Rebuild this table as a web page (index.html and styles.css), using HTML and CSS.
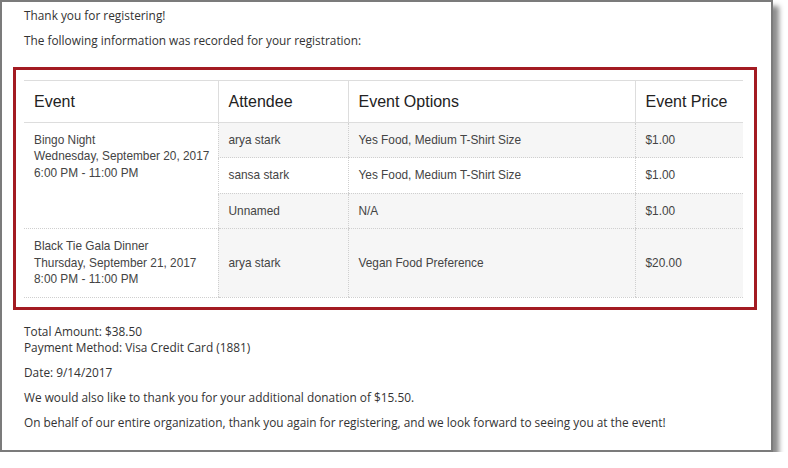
FILE: index.html
```html
<!DOCTYPE html>
<html>
<head>
<meta charset="utf-8">
<link rel="stylesheet" href="styles.css">
</head>
<body>
<div class="frame">
  <p>Thank you for registering!</p>
  <p>The following information was recorded for your registration:</p>
  <div class="highlight">
    <table class="reg">
      <colgroup>
        <col class="c-event">
        <col class="c-att">
        <col class="c-opt">
        <col class="c-price">
      </colgroup>
      <thead>
        <tr><th>Event</th><th>Attendee</th><th>Event Options</th><th>Event Price</th></tr>
      </thead>
      <tbody>
        <tr>
          <td rowspan="3" class="ev">Bingo Night<br>Wednesday, September 20, 2017<br>6:00 PM - 11:00 PM</td>
          <td>arya stark</td><td>Yes Food, Medium T-Shirt Size</td><td>$1.00</td>
        </tr>
        <tr class="alt"><td>sansa stark</td><td>Yes Food, Medium T-Shirt Size</td><td>$1.00</td></tr>
        <tr><td>Unnamed</td><td>N/A</td><td>$1.00</td></tr>
      </tbody>
      <tbody>
        <tr>
          <td class="ev">Black Tie Gala Dinner<br>Thursday, September 21, 2017<br>8:00 PM - 11:00 PM</td>
          <td>arya stark</td><td>Vegan Food Preference</td><td>$20.00</td>
        </tr>
      </tbody>
    </table>
  </div>
  <p class="summary">Total Amount: $38.50<br>Payment Method: Visa Credit Card (1881)</p>
  <p>Date: 9/14/2017</p>
  <p>We would also like to thank you for your additional donation of $15.50.</p>
  <p>On behalf of our entire organization, thank you again for registering, and we look forward to seeing you at the event!</p>
</div>
</body>
</html>
```
FILE: styles.css
```css
html, body {
  margin: 0;
  padding: 0;
  background: #ffffff;
}
.frame {
  box-sizing: border-box;
  width: 773px;
  height: 452px;
  border: 2px solid #7b7b7b;
  box-shadow: 6px 6px 5px rgba(0, 0, 0, 0.45);
  padding: 5px 0 0 22px;
  font-family: "Open Sans", sans-serif;
  font-size: 11.85px;
  line-height: 16.8px;
  color: #333333;
  background: #ffffff;
}
.frame p {
  margin: 0 0 8px 0;
}
.highlight {
  width: 744px;
  box-sizing: border-box;
  margin: 18px 0 0 -11px;
  border: 3px solid #a31b22;
  padding: 10px 11px 9px 8px;
}
.frame p.summary {
  margin-top: 13px;
}
.reg {
  border-collapse: collapse;
  table-layout: fixed;
  width: 719px;
  font-family: "Liberation Sans", Arial, sans-serif;
  color: #444444;
}
.c-event { width: 194px; }
.c-att { width: 130px; }
.c-opt { width: 287px; }
.c-price { width: 108px; }
.reg th {
  font-size: 16px;
  font-weight: normal;
  line-height: 23px;
  text-align: left;
  color: #222222;
  padding: 9px 10px;
  border-top: 1px solid #dddddd;
  border-bottom: 1px solid #dddddd;
  border-left: 1px solid #dddddd;
  background: #ffffff;
}
.reg th:first-child {
  border-left: none;
}
.reg td {
  font-size: 11.85px;
  line-height: 16.5px;
  padding: 9px 10px;
  vertical-align: middle;
  background: #f6f6f6;
  border-bottom: 1px dotted #cfcfcf;
  border-left: 1px dotted #cfcfcf;
}
.reg td.ev {
  background: #ffffff;
  vertical-align: top;
  border-left: none;
  padding-right: 2px;
  white-space: nowrap;
}
.reg tr.alt td {
  background: #ffffff;
}
```
